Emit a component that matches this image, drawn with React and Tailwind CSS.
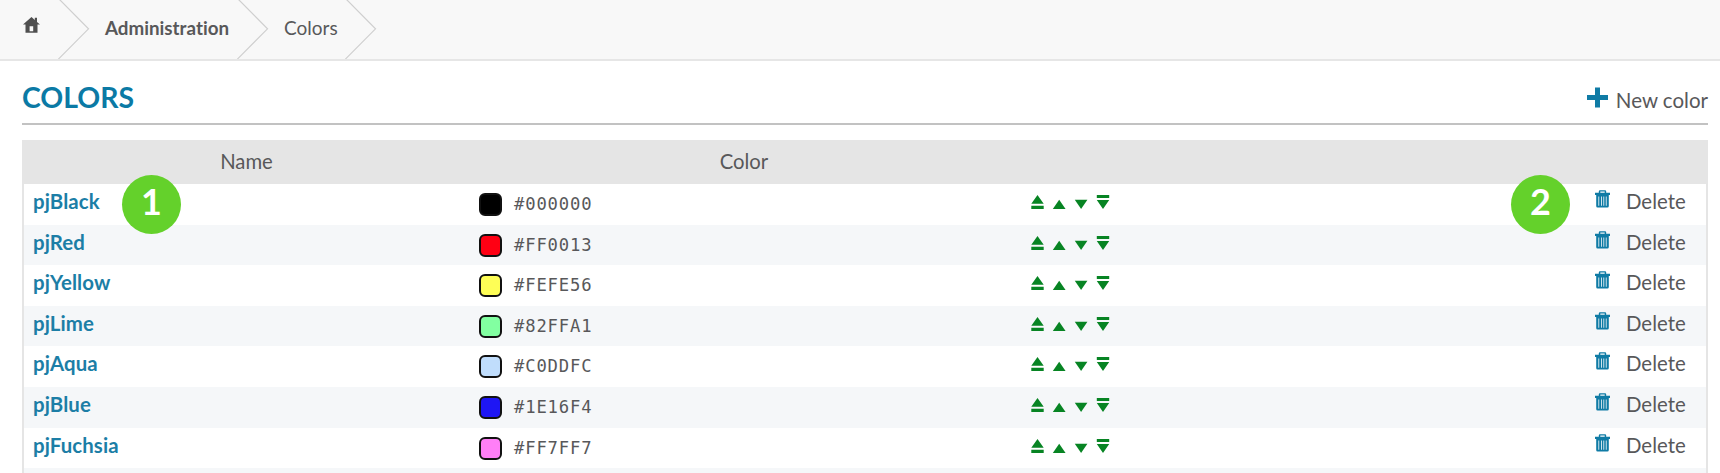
const COLORS = [
  ["pjBlack", "#000000"],
  ["pjRed", "#FF0013"],
  ["pjYellow", "#FEFE56"],
  ["pjLime", "#82FFA1"],
  ["pjAqua", "#C0DDFC"],
  ["pjBlue", "#1E16F4"],
  ["pjFuchsia", "#FF7FF7"],
];

function Chevron() {
  return (
    <svg className="block h-[59px] w-8 shrink-0" viewBox="0 0 32 59" fill="none" stroke="#cfcfcf" strokeWidth="1.2">
      <path d="M1.5 -0.5 L30.5 28.8 L0 59.5" />
    </svg>
  );
}

function HomeIcon() {
  return (
    <svg className="block h-4 w-[17px]" viewBox="0 0 17 16" fill="#4f4f4f">
      <path d="M8.5 0 L11.8 3 V0.8 H14 V4.9 L17 7.6 H14.5 V15.8 H2.5 V7.6 H0 Z M6.6 9.2 V14.2 H10.2 V9.2 Z" fillRule="evenodd" />
    </svg>
  );
}

function TrashIcon() {
  return (
    <svg className="block h-[18px] w-[15px]" viewBox="0 0 15 18" fill="#0f7ba5">
      <path d="M3.8 2.8 V1.4 Q3.8 0.2 5 0.2 H10 Q11.2 0.2 11.2 1.4 V2.8 H15 V5 H0 V2.8 Z M5.3 2.8 H9.7 V1.6 H5.3 Z" fillRule="evenodd" />
      <path d="M1.2 5 H13.8 V16 Q13.8 17.6 12.4 17.6 H2.6 Q1.2 17.6 1.2 16 Z M3.4 6.5 V15.8 H4.2 V6.5 Z M6 6.5 V15.8 H6.8 V6.5 Z M8.4 6.5 V15.8 H9.2 V6.5 Z M10.8 6.5 V15.8 H11.6 V6.5 Z" fillRule="evenodd" />
    </svg>
  );
}

function Arrows() {
  return (
    <svg className="block h-[14px] w-[79px]" viewBox="0 0 79 14" fill="#078423">
      <path d="M6.5 0 L12.7 8.8 H0.3 Z M0.3 10.8 H12.7 V14 H0.3 Z" />
      <path d="M28.2 4.8 L34.6 14 H21.8 Z" />
      <path d="M43.8 4.8 H56.4 L50.1 14 Z" />
      <path d="M65.8 0 H78.2 V3 H65.8 Z M65.8 5 H78.2 L72 14 Z" />
    </svg>
  );
}

function Badge({ children, className }) {
  return (
    <div className={`absolute flex h-[59px] w-[59px] justify-center rounded-full bg-[#64d12b] text-[36px] leading-[52px] font-bold text-white ${className}`}>
      {children}
    </div>
  );
}

export default function App() {
  return (
    <div className="relative h-[473px] overflow-hidden bg-white font-['Lato',sans-serif] text-[20px] text-[#58585a] [font-variant-ligatures:none]">
      <nav className="flex h-[61px] border-b-2 border-[#e6e6e6] bg-[#f8f8f8]">
        <div className="w-[58px] pt-[17px] pl-[23px]">
          <HomeIcon />
        </div>
        <Chevron />
        <span className="w-[147px] pl-[15px] text-[18.8px] leading-[55px] font-bold">Administration</span>
        <Chevron />
        <span className="w-[76px] pl-[15px] text-[19px] leading-[55px]">Colors</span>
        <Chevron />
      </nav>
      <main className="pr-[12px] pl-[22px]">
        <header className="flex h-[64px] items-start justify-between border-b-2 border-[#c2c2c2]">
          <h1 className="pt-[17px] text-[28.4px] leading-[38px] font-bold text-[#0b7aa5]">COLORS</h1>
          <a className="flex items-start gap-[8px] pt-[25px]">
            <svg className="mt-[1px] block h-[21px] w-[21px]" viewBox="0 0 21 21" fill="#0f7ba5">
              <path d="M8 0.5 H13 V8 H21 V13 H13 V20.5 H8 V13 H0 V8 H8 Z" />
            </svg>
            <span className="text-[20.5px] leading-[28px]">New color</span>
          </a>
        </header>
        <section className="mt-[15px] h-[400px] border-x-2 border-[#e5e5e5]">
          <div className="flex h-[44px] bg-[#e5e5e5] text-center text-[20.3px] leading-[42px]">
            <span className="w-[445px]">Name</span>
            <span className="w-[550px]">Color</span>
          </div>
          {COLORS.concat([["", ""]]).map(([name, hex], i) => (
            <div key={i} className="flex h-[40.6px] items-start odd:bg-[#f5f7f9] even:bg-white">
              {name && (
                <>
                  <span className="w-[455px] pl-[9px] text-[20.4px] leading-[35px] font-bold tracking-[0.1px] text-[#1c7ea6]">{name}</span>
                  <span className="mt-[9px] h-[23px] w-[23px] rounded-[6px] border-2 border-[#111]" style={{ backgroundColor: hex }} />
                  <span className="w-[529px] pl-[12px] font-['DejaVu_Sans_Mono',monospace] text-[17.2px] leading-[41px] tracking-[0.85px]">{hex}</span>
                  <span className="w-[564px] pt-[11px]"><Arrows /></span>
                  <span className="w-[31px] pt-[6px]"><TrashIcon /></span>
                  <span className="text-[20.4px] leading-[35px]">Delete</span>
                </>
              )}
            </div>
          ))}
        </section>
      </main>
      <Badge className="top-[175px] left-[122px]">1</Badge>
      <Badge className="top-[175px] left-[1511px]">2</Badge>
    </div>
  );
}
